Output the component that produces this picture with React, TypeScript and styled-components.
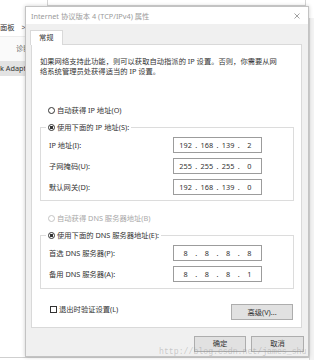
import React from 'react';
import styled, { createGlobalStyle } from 'styled-components';

const GlobalStyle = createGlobalStyle`
  html, body {
    margin: 0;
    padding: 0;
    background: #fff;
  }

  body {
    font-family: "Noto Sans", "Noto Sans CJK SC", sans-serif;
    font-size: 7.3px;
    color: #333;
    overflow: hidden;
  }

  * {
    box-sizing: border-box;
  }
`;

const Desktop = styled.div`
  position: relative;
  width: 314px;
  height: 360px;
  overflow: hidden;
  background: #fff;
`;

// window behind the dialog (control panel)
const BackWindow = styled.div`
  display: flex;
  flex-direction: column;
  width: 100%;
  height: 100%;
`;

const AddressBar = styled.div`
  flex: none;
  height: 18px;
  display: flex;
  padding-left: 47px;
`;

const SearchBox = styled.div`
  flex: 1;
  height: 6px;
  margin-right: 8px;
  border-left: 1px solid #d4d4d4;
  border-bottom: 1px solid #d4d4d4;
  border-right: 1px solid #d4d4d4;
`;

const MainRow = styled.div`
  flex: 1;
  display: flex;
`;

const ContentPane = styled.div`
  flex: 1;
  display: flex;
  flex-direction: column;
`;

const RightEdge = styled.div`
  flex: none;
  width: 5px;
  background: #f3f3f3;
  border-left: 1px solid #d8d8d8;
`;

const Breadcrumb = styled.div`
  flex: none;
  height: 19px;
  line-height: 19px;
  white-space: nowrap;
  border-bottom: 1px solid #ededed;

  span {
    margin-left: 7px;
    color: #666;
  }
`;

const CommandBar = styled.div`
  flex: none;
  height: 24px;
  line-height: 22px;
  padding-left: 16px;
  background: #fafafa;
  color: #666;
  white-space: nowrap;
`;

const ListRow = styled.div<{ $selected?: boolean }>`
  flex: none;
  height: 15px;
  line-height: 14px;
  background: ${(p) => (p.$selected ? '#e3e3e3' : 'transparent')};
  white-space: nowrap;
`;

const Filler = styled.div`
  flex: 1;
  border-bottom: 1px solid #cfcfcf;
`;

const BottomStrip = styled.div`
  flex: none;
  height: 2px;
`;

// the dialog window
const Dialog = styled.div`
  position: absolute;
  left: 25px;
  top: 6px;
  width: 284px;
  height: 351px;
  display: flex;
  flex-direction: column;
  border: 1px solid #c3c3c3;
  box-shadow: 0 0 4px rgba(0, 0, 0, 0.2);
  background: #f0f0f0;
`;

const TitleBar = styled.div`
  flex: none;
  height: 17px;
  display: flex;
  align-items: center;
  justify-content: space-between;
  padding: 0 8px 0 5px;
  background: #fff;
  color: #9a9a9a;
  white-space: nowrap;
`;

const DialogBody = styled.div`
  flex: 1;
  display: flex;
  flex-direction: column;
  align-items: flex-start;
  padding: 6px 6px 0 5px;
`;

const Tab = styled.div`
  position: relative;
  z-index: 1;
  height: 15px;
  line-height: 13px;
  padding: 0 8px;
  margin: 0 0 -1px -1px;
  background: #fff;
  border: 1px solid #d9d9d9;
  border-bottom: none;
`;

const Panel = styled.div`
  align-self: stretch;
  height: 284px;
  display: flex;
  flex-direction: column;
  padding: 11px 7px 0 8px;
  background: #fff;
  border: 1px solid #d9d9d9;
`;

const Description = styled.p`
  margin: 0;
  line-height: 10px;
  white-space: nowrap;
`;

const RadioRow = styled.div<{ $top: number; $disabled?: boolean }>`
  display: flex;
  align-items: center;
  gap: 2px;
  height: 10px;
  line-height: 10px;
  margin: ${(p) => p.$top}px 0 0 8px;
  color: ${(p) => (p.$disabled ? '#a8a8a8' : '#333')};
  white-space: nowrap;
`;

const Radio = styled.span<{ $checked?: boolean; $disabled?: boolean }>`
  flex: none;
  width: 7px;
  height: 7px;
  border-radius: 50%;
  border: 1px solid ${(p) => (p.$disabled ? '#c4c4c4' : '#333')};
  background: ${(p) =>
    p.$checked ? 'radial-gradient(circle, #333 0 1.4px, #fff 1.9px)' : '#fff'};
`;

const GroupBox = styled.fieldset<{ $top: number; $bottom: number }>`
  margin: ${(p) => p.$top}px 0 0 0;
  padding: 5px 0 ${(p) => p.$bottom}px 8px;
  min-width: 0;
  border: 1px solid #dcdcdc;
`;

const Legend = styled.legend`
  display: flex;
  align-items: center;
  gap: 2px;
  height: 10px;
  line-height: 10px;
  padding: 0 2px;
  margin-left: -3px;
  white-space: nowrap;
`;

const FieldGrid = styled.div`
  display: grid;
  grid-template-columns: 124px 89px;
  row-gap: 5px;
  align-items: center;
`;

const FieldLabel = styled.span`
  white-space: nowrap;
`;

const IpBox = styled.div`
  height: 16px;
  display: grid;
  grid-template-columns: 1fr 2px 1fr 2px 1fr 2px 1fr;
  align-items: center;
  padding: 0 2px;
  border: 1px solid #9c9c9c;
  background: #fff;
  line-height: 14px;
`;

const Octet = styled.span`
  text-align: center;
`;

const Dot = styled.span`
  text-align: center;
`;

const BottomRow = styled.div`
  display: flex;
  justify-content: space-between;
  align-items: flex-start;
  margin: 15px 1px 0 0;
  padding-left: 10px;
`;

const CheckLabel = styled.label`
  display: flex;
  align-items: center;
  gap: 2px;
  height: 10px;
  line-height: 10px;
  white-space: nowrap;
`;

const CheckBox = styled.span`
  flex: none;
  width: 7px;
  height: 7px;
  border: 1px solid #333;
  background: #fff;
`;

// $raised puts the label at the top of the button (the footer buttons, whose bottom the watermark covers)
const Button = styled.button<{ $width: number; $raised?: boolean }>`
  width: ${(p) => p.$width}px;
  height: 16px;
  padding: 0;
  border: 1px solid #adadad;
  background: #e1e1e1;
  color: #333;
  font: inherit;
  line-height: 12px;
  display: flex;
  align-items: ${(p) => (p.$raised ? 'flex-start' : 'center')};
  justify-content: center;
`;

const Footer = styled.div`
  align-self: stretch;
  display: flex;
  justify-content: flex-end;
  gap: 5px;
  margin: 8px -2px 0 0;
`;

const Watermark = styled.div`
  position: absolute;
  left: 159px;
  top: 347px;
  font-family: "Liberation Mono", monospace;
  font-size: 8.2px;
  line-height: 10px;
  color: rgba(150, 150, 150, 0.45);
  white-space: nowrap;
  pointer-events: none;
`;

const CloseIcon = () => (
  <svg width="6" height="6" viewBox="0 0 6 6">
    <path d="M0.5 0.5 L5.5 5.5 M5.5 0.5 L0.5 5.5" stroke="#8a8a8a" strokeWidth="0.8" />
  </svg>
);

const IpField: React.FC<{ value: string }> = ({ value }) => {
  const parts = value.split('.');
  return (
    <IpBox>
      {parts.map((p, i) => (
        <React.Fragment key={i}>
          {i > 0 && <Dot>.</Dot>}
          <Octet>{p}</Octet>
        </React.Fragment>
      ))}
    </IpBox>
  );
};

export default function App() {
  return (
    <>
      <GlobalStyle />
      <Desktop>
        <BackWindow>
          <AddressBar>
            <SearchBox />
          </AddressBar>
          <MainRow>
            <ContentPane>
              <Breadcrumb>
                面板<span>&gt;</span>
              </Breadcrumb>
              <CommandBar>诊断这个连接</CommandBar>
              <ListRow $selected>k Adapter</ListRow>
              <Filler />
              <BottomStrip />
            </ContentPane>
            <RightEdge />
          </MainRow>
        </BackWindow>

        <Dialog>
          <TitleBar>
            <span>Internet 协议版本 4 (TCP/IPv4) 属性</span>
            <CloseIcon />
          </TitleBar>
          <DialogBody>
            <Tab>常规</Tab>
            <Panel>
              <Description>
                如果网络支持此功能，则可以获取自动指派的 IP 设置。否则，你需要从网
                <br />
                络系统管理员处获得适当的 IP 设置。
              </Description>

              <RadioRow $top={29}>
                <Radio />
                自动获得 IP 地址(O)
              </RadioRow>

              <GroupBox $top={7} $bottom={5}>
                <Legend>
                  <Radio $checked />
                  使用下面的 IP 地址(S):
                </Legend>
                <FieldGrid>
                  <FieldLabel>IP 地址(I):</FieldLabel>
                  <IpField value="192.168.139.2" />
                  <FieldLabel>子网掩码(U):</FieldLabel>
                  <IpField value="255.255.255.0" />
                  <FieldLabel>默认网关(D):</FieldLabel>
                  <IpField value="192.168.139.0" />
                </FieldGrid>
              </GroupBox>

              <RadioRow $top={12} $disabled>
                <Radio $disabled />
                自动获得 DNS 服务器地址(B)
              </RadioRow>

              <GroupBox $top={7} $bottom={6}>
                <Legend>
                  <Radio $checked />
                  使用下面的 DNS 服务器地址(E):
                </Legend>
                <FieldGrid>
                  <FieldLabel>首选 DNS 服务器(P):</FieldLabel>
                  <IpField value="8.8.8.8" />
                  <FieldLabel>备用 DNS 服务器(A):</FieldLabel>
                  <IpField value="8.8.8.1" />
                </FieldGrid>
              </GroupBox>

              <BottomRow>
                <CheckLabel>
                  <CheckBox />
                  退出时验证设置(L)
                </CheckLabel>
                <Button $width={62}>高级(V)...</Button>
              </BottomRow>
            </Panel>
            <Footer>
              <Button $width={52} $raised>确定</Button>
              <Button $width={53} $raised>取消</Button>
            </Footer>
          </DialogBody>
        </Dialog>

        <Watermark>http://blog.csdn.net/james_shu</Watermark>
      </Desktop>
    </>
  );
}
